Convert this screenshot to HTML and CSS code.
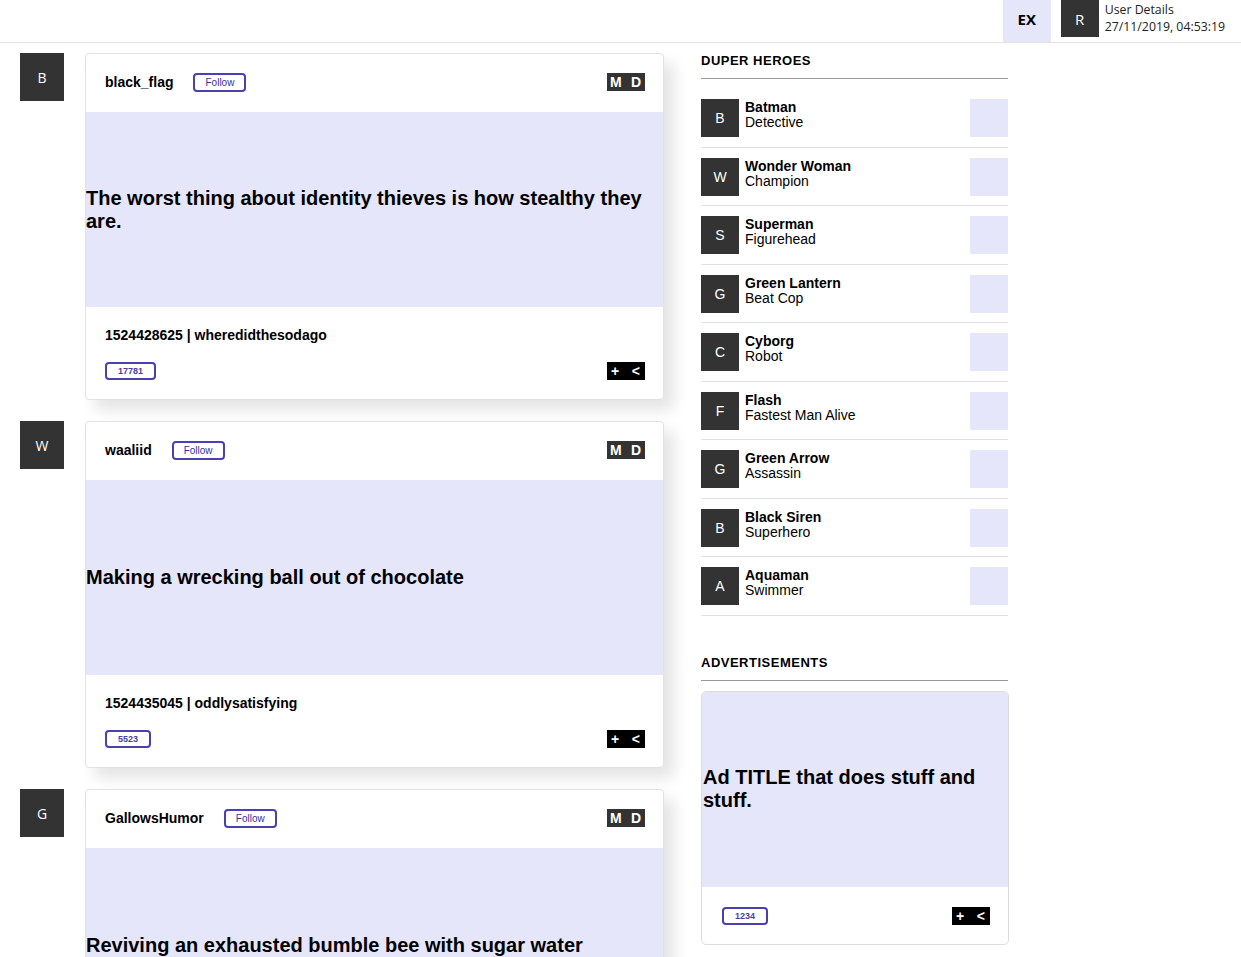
FILE: index.html
```html
<!DOCTYPE html>
<html lang="en">
<head>
<meta charset="utf-8">
<title>Feed</title>
<link rel="stylesheet" href="styles.css">
</head>
<body>
<header class="topbar">
  <div class="ex">EX</div>
  <div class="user-avatar">R</div>
  <div class="user-info">
    <div>User Details</div>
    <div>27/11/2019, 04:53:19</div>
  </div>
</header>
<main class="layout">
  <section class="feed">
    <article class="post">
      <div class="post-avatar">B</div>
      <div class="card">
        <div class="card-head"><span class="username">black_flag</span><button class="follow">Follow</button><span class="md"><span>M</span><span>D</span></span></div>
        <div class="card-body"><h2 class="title">The worst thing about identity thieves is how stealthy they are.</h2></div>
        <div class="card-foot">
          <div class="meta">1524428625 | wheredidthesodago</div>
          <div class="foot-row"><span class="count">17781</span><span class="actions"><span>+</span><span>&lt;</span></span></div>
        </div>
      </div>
    </article>
    <article class="post">
      <div class="post-avatar">W</div>
      <div class="card">
        <div class="card-head"><span class="username">waaliid</span><button class="follow">Follow</button><span class="md"><span>M</span><span>D</span></span></div>
        <div class="card-body"><h2 class="title">Making a wrecking ball out of chocolate</h2></div>
        <div class="card-foot">
          <div class="meta">1524435045 | oddlysatisfying</div>
          <div class="foot-row"><span class="count">5523</span><span class="actions"><span>+</span><span>&lt;</span></span></div>
        </div>
      </div>
    </article>
    <article class="post">
      <div class="post-avatar">G</div>
      <div class="card">
        <div class="card-head"><span class="username">GallowsHumor</span><button class="follow">Follow</button><span class="md"><span>M</span><span>D</span></span></div>
        <div class="card-body"><h2 class="title">Reviving an exhausted bumble bee with sugar water</h2></div>
        <div class="card-foot">
          <div class="meta">1524431012 | aww</div>
          <div class="foot-row"><span class="count">4821</span><span class="actions"><span>+</span><span>&lt;</span></span></div>
        </div>
      </div>
    </article>
  </section>
  <aside class="sidebar">
    <h3 class="side-heading">DUPER HEROES</h3>
    <ul class="heroes">
      <li class="hero"><div class="hero-avatar">B</div><div class="hero-info"><div class="hero-name">Batman</div><div>Detective</div></div><div class="hero-thumb"></div></li>
      <li class="hero"><div class="hero-avatar">W</div><div class="hero-info"><div class="hero-name">Wonder Woman</div><div>Champion</div></div><div class="hero-thumb"></div></li>
      <li class="hero"><div class="hero-avatar">S</div><div class="hero-info"><div class="hero-name">Superman</div><div>Figurehead</div></div><div class="hero-thumb"></div></li>
      <li class="hero"><div class="hero-avatar">G</div><div class="hero-info"><div class="hero-name">Green Lantern</div><div>Beat Cop</div></div><div class="hero-thumb"></div></li>
      <li class="hero"><div class="hero-avatar">C</div><div class="hero-info"><div class="hero-name">Cyborg</div><div>Robot</div></div><div class="hero-thumb"></div></li>
      <li class="hero"><div class="hero-avatar">F</div><div class="hero-info"><div class="hero-name">Flash</div><div>Fastest Man Alive</div></div><div class="hero-thumb"></div></li>
      <li class="hero"><div class="hero-avatar">G</div><div class="hero-info"><div class="hero-name">Green Arrow</div><div>Assassin</div></div><div class="hero-thumb"></div></li>
      <li class="hero"><div class="hero-avatar">B</div><div class="hero-info"><div class="hero-name">Black Siren</div><div>Superhero</div></div><div class="hero-thumb"></div></li>
      <li class="hero"><div class="hero-avatar">A</div><div class="hero-info"><div class="hero-name">Aquaman</div><div>Swimmer</div></div><div class="hero-thumb"></div></li>
    </ul>
    <h3 class="side-heading ads-heading">ADVERTISEMENTS</h3>
    <div class="ad-card">
      <div class="ad-body"><h2 class="title">Ad TITLE that does stuff and stuff.</h2></div>
      <div class="ad-foot">
        <div class="foot-row"><span class="count">1234</span><span class="actions"><span>+</span><span>&lt;</span></span></div>
      </div>
    </div>
  </aside>
</main>
</body>
</html>
```
FILE: styles.css
```css
body {
  margin: 0;
  background: #fff;
  color: #000;
  font-family: "Liberation Sans", Arial, sans-serif;
}

.topbar {
  display: flex;
  justify-content: flex-end;
  align-items: flex-start;
  height: 42px;
  padding-right: 16px;
  border-bottom: 1px solid #e4e4e4;
  font-family: "Open Sans", "Noto Sans", sans-serif;
}

.ex {
  width: 48px;
  height: 42px;
  box-sizing: border-box;
  padding-bottom: 5px;
  margin-right: 10px;
  background: #e6e6fa;
  display: flex;
  align-items: center;
  justify-content: center;
  font-weight: 700;
  font-size: 15px;
}

.user-avatar {
  width: 38px;
  height: 37px;
  margin-right: 6px;
  background: #333;
  color: #fff;
  display: flex;
  align-items: center;
  justify-content: center;
  font-size: 15px;
}

.user-info {
  padding-top: 1px;
  font-size: 12.3px;
  line-height: 17px;
  color: #222;
}

.layout {
  display: flex;
  align-items: flex-start;
  gap: 37px;
  padding: 10px 0 0 20px;
}

.feed {
  width: 644px;
  flex: none;
  display: flex;
  flex-direction: column;
  gap: 21px;
}

.post {
  display: flex;
  align-items: flex-start;
  gap: 21px;
}

.post-avatar {
  width: 44px;
  height: 48px;
  flex: none;
  background: #333;
  color: #fff;
  display: flex;
  align-items: center;
  justify-content: center;
  font-family: "Open Sans", "Noto Sans", sans-serif;
  font-size: 14px;
}

.card {
  width: 577px;
  flex: none;
  border: 1px solid #e2e2e2;
  border-radius: 4px;
  background: #fff;
  overflow: hidden;
  box-shadow: 10px 10px 15px rgba(0, 0, 0, 0.11);
}

.card-head {
  height: 58px;
  box-sizing: border-box;
  padding: 0 18px 2px 19px;
  display: flex;
  align-items: center;
}

.username {
  font-size: 14px;
  font-weight: 700;
}

.follow {
  margin-left: 20px;
  height: 19px;
  box-sizing: border-box;
  padding: 0 10px;
  border: 2px solid #4b40b0;
  border-radius: 4px;
  background: #fff;
  color: #3b3098;
  font-family: "Liberation Sans", Arial, sans-serif;
  font-size: 10px;
  line-height: 15px;
}

.md {
  margin-left: auto;
  width: 38px;
  height: 18px;
  box-sizing: border-box;
  padding: 0 4px 0 3px;
  background: #333;
  color: #fff;
  display: flex;
  justify-content: space-between;
  align-items: center;
  font-size: 14px;
  font-weight: 700;
  line-height: 18px;
}

.card-body {
  height: 195px;
  background: #e6e6fa;
  display: flex;
  align-items: center;
}

.title {
  margin: 0;
  font-size: 20px;
  font-weight: 700;
  line-height: 23px;
}

.card-foot {
  padding: 20px 18px 19px 19px;
}

.meta {
  margin-bottom: 19px;
  font-size: 14px;
  font-weight: 700;
  line-height: 16px;
}

.foot-row {
  height: 18px;
  display: flex;
  justify-content: space-between;
  align-items: center;
}

.count {
  height: 18px;
  box-sizing: border-box;
  padding: 0 11px;
  border: 2px solid #4b40b0;
  border-radius: 4px;
  color: #4b40a8;
  font-size: 9px;
  font-weight: 700;
  line-height: 14px;
}

.actions {
  width: 38px;
  height: 18px;
  box-sizing: border-box;
  padding: 0 5px 0 4px;
  background: #000;
  color: #fff;
  display: flex;
  justify-content: space-between;
  align-items: center;
  font-size: 14px;
  font-weight: 700;
  line-height: 18px;
}

.sidebar {
  width: 307px;
  flex: none;
}

.side-heading {
  margin: 0;
  padding-bottom: 9px;
  border-bottom: 1px solid #999;
  font-size: 13px;
  font-weight: 700;
  letter-spacing: 0.5px;
  line-height: 16px;
}

.heroes {
  list-style: none;
  margin: 10px 0 0;
  padding: 0;
}

.hero {
  display: flex;
  align-items: flex-start;
  gap: 6px;
  padding: 10px 0 9.5px;
  border-bottom: 1px solid #e0e0e0;
}

.hero-avatar {
  width: 38px;
  height: 38px;
  flex: none;
  background: #333;
  color: #fff;
  display: flex;
  align-items: center;
  justify-content: center;
  font-size: 14px;
}

.hero-info {
  flex: 1;
  padding-top: 1px;
  font-size: 14px;
  line-height: 15px;
}

.hero-name {
  font-weight: 700;
}

.hero-thumb {
  width: 38px;
  height: 38px;
  flex: none;
  background: #e6e6fa;
}

.ads-heading {
  margin-top: 39px;
}

.ad-card {
  width: 306px;
  margin-top: 10px;
  border: 1px solid #dddddd;
  border-radius: 5px;
  overflow: hidden;
}

.ad-body {
  height: 195px;
  padding-left: 1px;
  background: #e6e6fa;
  display: flex;
  align-items: center;
}

.ad-foot {
  padding: 20px 18px 19px 20px;
}
```
